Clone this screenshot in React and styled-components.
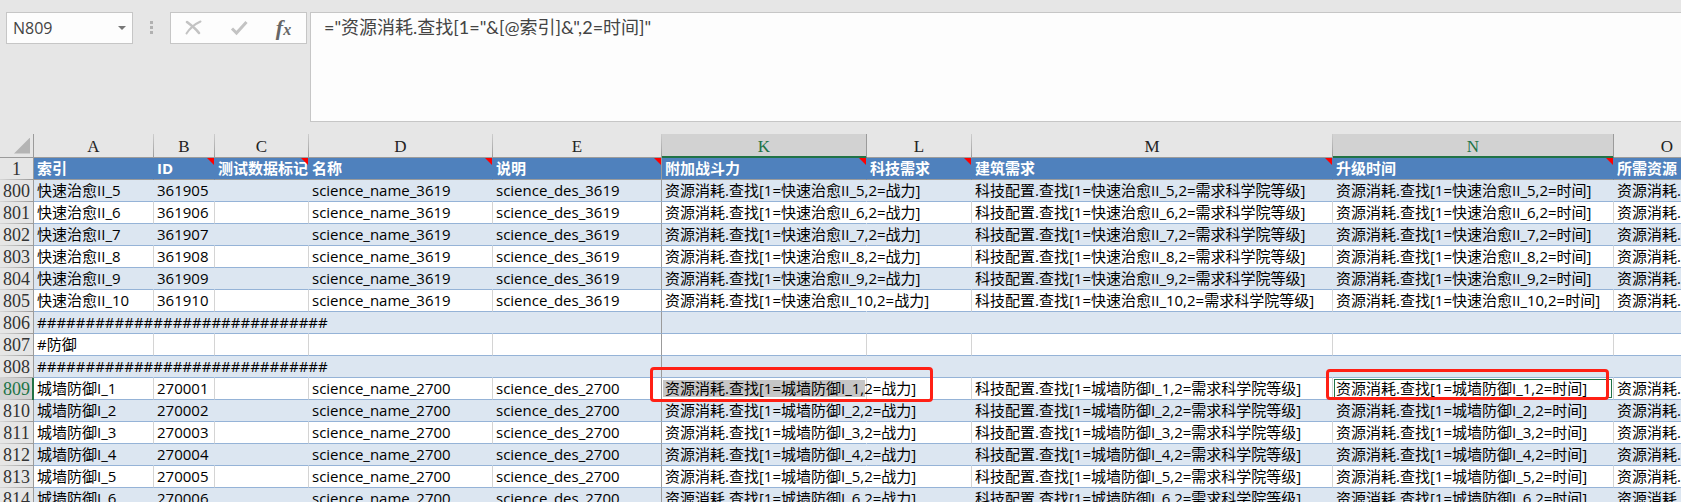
import React from "react";
import styled, { createGlobalStyle, css } from "styled-components";

const sans = `"Open Sans", "Noto Sans CJK SC", sans-serif`;
const formulaSans = `Lato, "Noto Sans CJK SC", sans-serif`;
const serif = `"Liberation Serif", "Noto Sans CJK SC", serif`;

const GlobalStyle = createGlobalStyle`
  *, *::before, *::after { box-sizing: border-box; }
  body { margin: 0; background: #e6e6e6; }
`;

const Workbook = styled.main`
  display: flex;
  flex-direction: column;
  height: 100vh;
  overflow: hidden;
  background: #e6e6e6;
  color: #000;
  font-family: ${sans};
`;

const FormulaBar = styled.header`
  display: flex;
  align-items: flex-start;
  flex: none;
  padding: 12px 0 12px 6px;
`;

const NameBox = styled.div`
  display: flex;
  align-items: center;
  width: 127px;
  height: 32px;
  background: #fdfdfd;
  border: 1px solid #c6c6c6;
`;

const NameInput = styled.input`
  flex: 1;
  min-width: 0;
  height: 30px;
  padding: 0 6px;
  border: 0;
  outline: 0;
  background: transparent;
  color: #444;
  font: 16px/30px ${sans};
`;

const NameToggle = styled.button`
  display: flex;
  align-items: center;
  justify-content: center;
  width: 21px;
  height: 30px;
  padding: 0;
  border: 0;
  background: transparent;

  &::before {
    content: "";
    border: 4px solid transparent;
    border-top-color: #777;
    border-bottom: 0;
  }
`;

const Grip = styled.div`
  display: grid;
  gap: 2px;
  margin: 9px 17px 0;

  i {
    width: 3px;
    height: 3px;
    background: #b1b1b1;
  }
`;

const EntryButtons = styled.div`
  display: flex;
  width: 137px;
  height: 32px;
  margin-right: 3px;
  background: #fdfdfd;
  border: 1px solid #c6c6c6;
`;

const EntryButton = styled.button`
  display: flex;
  flex: 1;
  align-items: center;
  justify-content: center;
  padding: 0;
  border: 0;
  background: transparent;
  color: #666;
  font: italic bold 22px/28px ${serif};

  small {
    font-size: 16px;
    padding-top: 4px;
  }
`;

const FormulaInput = styled.textarea`
  flex: 1;
  min-width: 0;
  height: 110px;
  padding: 1px 13px;
  border: 1px solid #c6c6c6;
  border-right: 0;
  border-radius: 0;
  outline: 0;
  resize: none;
  background: #fdfdfd;
  color: #444;
  font: 18px/26px ${formulaSans};
`;

const SheetView = styled.section`
  flex: 1;
  min-height: 0;
  overflow: hidden;
`;

const Sheet = styled.table`
  width: 100%;
  min-width: 1721px;
  table-layout: fixed;
  border-collapse: separate;
  border-spacing: 0;
`;

const Column = styled.col`
  width: ${(p) => (p.$width ? `${p.$width}px` : "auto")};
`;

const Corner = styled.th`
  height: 24px;
  padding: 0;
  border-right: 1px solid #9b9b9b;
  border-bottom: 1px solid #9b9b9b;
`;

const SelectAll = styled.button`
  display: block;
  width: 16px;
  height: 16px;
  margin: 0 3px 0 auto;
  padding: 0;
  border: 0;
  background: #b4b4b4;
  clip-path: polygon(100% 0, 100% 100%, 0 100%);
`;

const ColumnHeading = styled.th`
  height: 24px;
  padding: 2px 0 0;
  border-right: 1px solid #9b9b9b;
  border-image: linear-gradient(#cfcfcf, #9b9b9b) 1;
  border-bottom: 1px solid #9b9b9b;
  font: 17px/20px ${serif};
  color: #222;
  text-align: center;

  ${(p) =>
    p.$selected &&
    css`
      background: #d2d2d2;
      box-shadow: inset 0 -1px #217346;
      border-image: none;
      border-bottom-color: #217346;
      color: #217346;
    `}
`;

const RowHeading = styled.th`
  height: 22px;
  padding: 0;
  border-right: 1px solid #9b9b9b;
  background: linear-gradient(90deg, #d6d6d6, #9b9b9b) 0 100% / 100% 1px no-repeat;
  font: 18px/21px ${serif};
  color: #333;
  text-align: center;

  ${(p) =>
    p.$selected &&
    css`
      background-color: #d2d2d2;
      border-right-color: #217346;
      box-shadow: inset -1px 0 #217346;
      color: #217346;
    `}
`;

const TitleCell = styled.th`
  position: relative;
  height: 22px;
  padding: 0 3px;
  border-right: 1px solid ${(p) => (p.$frozenEdge ? "#9b9b9b" : "transparent")};
  border-bottom: 1px solid #9b9b9b;
  background: #4f81bd;
  color: #fff;
  font: bold 15px/21px ${sans};
  text-align: left;
  white-space: nowrap;

  ${(p) =>
    p.$note &&
    css`
      &::after {
        content: "";
        position: absolute;
        top: 0;
        right: 0;
        width: 7px;
        height: 7px;
        background: #f00;
        clip-path: polygon(0 0, 100% 0, 100% 100%);
      }
    `}
`;

const lineColor = (p) => {
  if (p.$frozenEdge) return "#9b9b9b";
  return p.$banded || p.$spills ? "transparent" : "#d4d4d4";
};

const Cell = styled.td`
  position: relative;
  height: 22px;
  padding: 0 3px;
  border-right: 1px solid ${lineColor};
  border-bottom: 1px solid #95b3d7;
  font: 15px/21px ${sans};
  white-space: nowrap;
`;

const DataRow = styled.tr`
  ${Cell} {
    background: ${(p) => (p.$banded ? "#dce6f1" : "#fff")};
  }
`;

const CellText = styled.span`
  position: relative;
  z-index: 1;
`;

const CopiedFill = styled.span`
  position: absolute;
  inset: 2px 1px;
  background: #c6c6c6;
`;

const ActiveOutline = styled.span`
  position: absolute;
  inset: 1px;
  border: 1px solid #217346;
`;

const Callout = styled.span`
  position: absolute;
  z-index: 2;
  top: ${(p) => p.$top}px;
  left: ${(p) => p.$left}px;
  width: 283px;
  height: ${(p) => p.$height}px;
  border: 3px solid #ff2015;
  border-radius: 4px;
`;

const columns = [
  { letter: "A", width: 120, title: "索引" },
  { letter: "B", width: 61, title: "ID", note: true },
  { letter: "C", width: 94, title: "测试数据标记", note: true },
  { letter: "D", width: 184, title: "名称", note: true },
  { letter: "E", width: 169, title: "说明", note: true },
  { letter: "K", width: 205, title: "附加战斗力", note: true, selected: true },
  { letter: "L", width: 105, title: "科技需求", note: true },
  { letter: "M", width: 361, title: "建筑需求", note: true },
  { letter: "N", width: 281, title: "升级时间", note: true, selected: true },
  { letter: "O", title: "所需资源" },
];

const science = (number, key, id, group) => ({
  number,
  cells: {
    A: key,
    B: id,
    D: `science_name_${group}`,
    E: `science_des_${group}`,
    K: `资源消耗.查找[1=${key},2=战力]`,
    M: `科技配置.查找[1=${key},2=需求科学院等级]`,
    N: `资源消耗.查找[1=${key},2=时间]`,
    O: `资源消耗.查找[1=${key},2=资源]`,
  },
});

const rows = [
  ...[5, 6, 7, 8, 9, 10].map((level) =>
    science(795 + level, `快速治愈II_${level}`, 361900 + level, 3619)
  ),
  { number: 806, cells: { A: "#".repeat(30) } },
  { number: 807, cells: { A: "#防御" } },
  { number: 808, cells: { A: "#".repeat(30) } },
  ...[1, 2, 3, 4, 5, 6].map((level) =>
    science(808 + level, `城墙防御I_${level}`, 270000 + level, 2700)
  ),
];

const activeRow = 809;

function SheetRow({ row }) {
  const banded = row.number % 2 === 0;
  const active = row.number === activeRow;
  return (
    <DataRow $banded={banded}>
      <RowHeading scope="row" $selected={active}>
        {row.number}
      </RowHeading>
      {columns.map(({ letter }) => (
        <Cell
          key={letter}
          $banded={banded}
          $frozenEdge={letter === "E"}
          $spills={letter === "K" && row.cells.K && !active}
        >
          {active && letter === "K" && <CopiedFill />}
          {active && letter === "N" && <ActiveOutline />}
          {row.cells[letter] && <CellText>{row.cells[letter]}</CellText>}
          {active && letter === "K" && <Callout $top={-11} $left={-12} $height={35} />}
          {active && letter === "N" && <Callout $top={-9} $left={-7} $height={31} />}
        </Cell>
      ))}
    </DataRow>
  );
}

export default function App() {
  return (
    <Workbook>
      <GlobalStyle />
      <FormulaBar>
        <NameBox>
          <NameInput aria-label="名称框" defaultValue="N809" />
          <NameToggle type="button" aria-label="展开名称框" />
        </NameBox>
        <Grip aria-hidden="true">
          <i />
          <i />
          <i />
        </Grip>
        <EntryButtons>
          <EntryButton type="button" aria-label="取消">
            <svg width="17" height="16" viewBox="0 0 17 16" fill="none" stroke="#c3c3c3">
              <path d="M2 2C6 5 11 9 14 13" strokeWidth="2.6" strokeLinecap="round" />
              <path d="M15.5 1.5C10 4 5 8 1.5 13.5" strokeWidth="2" strokeLinecap="round" />
            </svg>
          </EntryButton>
          <EntryButton type="button" aria-label="输入">
            <svg width="18" height="16" viewBox="0 0 18 16" fill="none" stroke="#c3c3c3">
              <path d="M2 8.5L6.5 13L16.5 2" strokeWidth="3" />
            </svg>
          </EntryButton>
          <EntryButton type="button" aria-label="插入函数">
            f<small>x</small>
          </EntryButton>
        </EntryButtons>
        <FormulaInput
          aria-label="编辑栏"
          spellCheck={false}
          defaultValue={'="资源消耗.查找[1="&[@索引]&",2=时间]"'}
        />
      </FormulaBar>
      <SheetView>
        <Sheet>
          <colgroup>
            <Column $width={34} />
            {columns.map(({ letter, width }) => (
              <Column key={letter} $width={width} />
            ))}
          </colgroup>
          <thead>
            <tr>
              <Corner>
                <SelectAll type="button" aria-label="全选" />
              </Corner>
              {columns.map(({ letter, selected }) => (
                <ColumnHeading key={letter} scope="col" $selected={selected}>
                  {letter}
                </ColumnHeading>
              ))}
            </tr>
          </thead>
          <tbody>
            <tr>
              <RowHeading scope="row">1</RowHeading>
              {columns.map(({ letter, title, note }) => (
                <TitleCell key={letter} $note={note} $frozenEdge={letter === "E"}>
                  {title}
                </TitleCell>
              ))}
            </tr>
            {rows.map((row) => (
              <SheetRow key={row.number} row={row} />
            ))}
          </tbody>
        </Sheet>
      </SheetView>
    </Workbook>
  );
}
